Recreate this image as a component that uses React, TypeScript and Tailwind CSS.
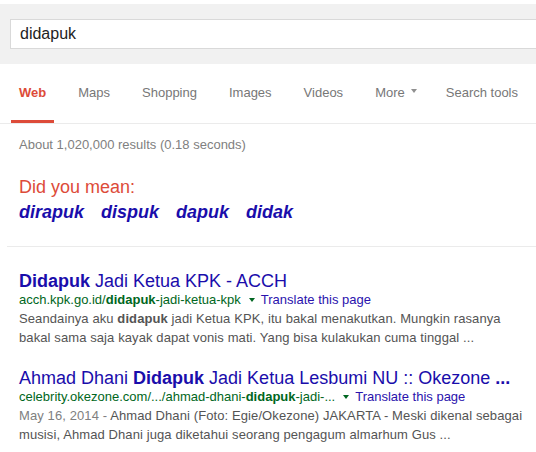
import React from "react";

const tabs = ["Web", "Maps", "Shopping", "Images", "Videos"];

function Caret({ color }: { color: string }) {
  return (
    <span
      className="inline-block w-0 h-0 border-x-[3px] border-x-transparent border-t-[4px] align-middle"
      style={{ borderTopColor: color }}
    />
  );
}

function Result({
  title,
  url,
  snippet,
}: {
  title: React.ReactNode;
  url: React.ReactNode;
  snippet: React.ReactNode;
}) {
  return (
    <div>
      <h3 className="text-[18px] leading-[20px] text-[#1a0dab] whitespace-nowrap">{title}</h3>
      <div className="text-[13px] leading-[18px] whitespace-nowrap flex items-center">
        <cite className="not-italic text-[#006621]">{url}</cite>
        <span className="ml-[8px] mr-[6px] flex items-center">
          <Caret color="#006621" />
        </span>
        <a className="text-[#2a12ad]">Translate this page</a>
      </div>
      <p className="text-[13px] leading-[19px] tracking-[0.1px] text-[#545454] whitespace-nowrap">{snippet}</p>
    </div>
  );
}

export default function App() {
  return (
    <div
      className="w-[536px] h-[452px] overflow-hidden bg-white"
      style={{ fontFamily: '"Liberation Sans", Arial, sans-serif' }}
    >
      {/* search bar */}
      <div className="mt-[4px] h-[60px] bg-[#f1f1f1] pt-[15px] pl-[10px]">
        <div className="h-[30px] w-[560px] bg-white border border-[#d9d9d9] flex items-center pl-[9px] text-[16px] text-[#222]">
          didapuk
        </div>
      </div>

      {/* tabs */}
      <div className="h-[60px] border-b border-[#ebebeb] flex pl-[11px] gap-[16px] text-[13px] text-[#777] whitespace-nowrap">
        {tabs.map((t) => (
          <div
            key={t}
            className={
              t === "Web"
                ? "px-[8px] pt-[19px] border-b-[3px] border-[#dd4b39] text-[#dd4b39] font-bold"
                : "px-[8px] pt-[19px]"
            }
          >
            {t}
          </div>
        ))}
        <div className="px-[8px] pt-[19px] flex items-start gap-[6px]">
          More
          <span className="mt-[6px] flex">
            <Caret color="#909090" />
          </span>
        </div>
        <div className="px-[8px] pt-[19px] -ml-[3px]">Search tools</div>
      </div>

      {/* stats and spelling */}
      <div className="pl-[19px]">
        <div className="mt-[13px] text-[13px] leading-[16px] text-[#808080]">
          About 1,020,000 results (0.18 seconds)
        </div>
        <div className="mt-[23px] text-[18px] leading-[22px] text-[#dd4b39]">Did you mean:</div>
        <div className="mt-[3px] flex gap-[17px] text-[18px] leading-[22px] font-bold italic text-[#1a0dab]">
          <a>dirapuk</a>
          <a>dispuk</a>
          <a>dapuk</a>
          <a>didak</a>
        </div>
      </div>

      <div className="ml-[7px] mt-[23px] h-px bg-[#ebebeb]" />

      {/* results */}
      <div className="pl-[19px] mt-[24px] flex flex-col gap-[21px]">
        <Result
          title={
            <>
              <b>Didapuk</b> Jadi Ketua KPK - ACCH
            </>
          }
          url={
            <>
              acch.kpk.go.id/<b>didapuk</b>-jadi-ketua-kpk
            </>
          }
          snippet={
            <>
              Seandainya aku <b>didapuk</b> jadi Ketua KPK, itu bakal menakutkan. Mungkin rasanya
              <br />
              bakal sama saja kayak dapat vonis mati. Yang bisa kulakukan cuma tinggal ...
            </>
          }
        />
        <Result
          title={
            <>
              Ahmad Dhani <b>Didapuk</b> Jadi Ketua Lesbumi NU :: Okezone <b>...</b>
            </>
          }
          url={
            <>
              celebrity.okezone.com/.../ahmad-dhani-<b>didapuk</b>-jadi-...
            </>
          }
          snippet={
            <>
              <span className="text-[#808080]">May 16, 2014 - </span>Ahmad Dhani (Foto: Egie/Okezone) JAKARTA - Meski dikenal sebagai
              <br />
              musisi, Ahmad Dhani juga diketahui seorang pengagum almarhum Gus ...
            </>
          }
        />
      </div>
    </div>
  );
}
